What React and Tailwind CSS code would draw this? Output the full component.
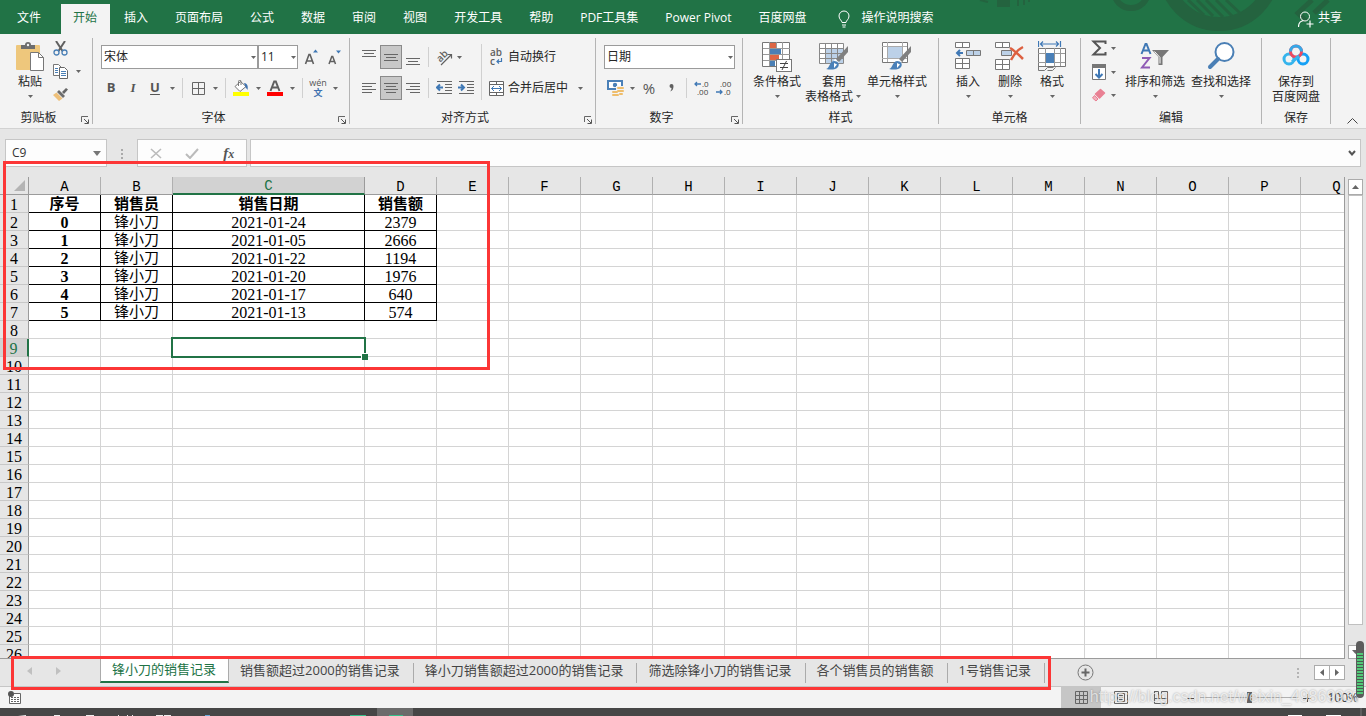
import React from "react";

const MENU = ["文件", "开始", "插入", "页面布局", "公式", "数据", "审阅", "视图", "开发工具", "帮助", "PDF工具集", "Power Pivot", "百度网盘"];

const COLUMNS = ["A", "B", "C", "D", "E", "F", "G", "H", "I", "J", "K", "L", "M", "N", "O", "P", "Q"];

const DATA = [
  ["序号", "销售员", "销售日期", "销售额"],
  ["0", "锋小刀", "2021-01-24", "2379"],
  ["1", "锋小刀", "2021-01-05", "2666"],
  ["2", "锋小刀", "2021-01-22", "1194"],
  ["3", "锋小刀", "2021-01-20", "1976"],
  ["4", "锋小刀", "2021-01-17", "640"],
  ["5", "锋小刀", "2021-01-13", "574"],
];

const ROW_COUNT = 26;

const SHEETS = [
  "锋小刀的销售记录",
  "销售额超过2000的销售记录",
  "锋小刀销售额超过2000的销售记录",
  "筛选除锋小刀的销售记录",
  "各个销售员的销售额",
  "1号销售记录",
];

/* ---------- small shared pieces ---------- */

function Svg({ w, h, children, className = "" }) {
  return (
    <svg width={w} height={h} viewBox={`0 0 ${w} ${h}`} fill="none" className={`shrink-0 ${className}`} aria-hidden="true">
      {children}
    </svg>
  );
}

function Caret({ className = "w-3" }) {
  return (
    <span className={`flex shrink-0 justify-center ${className}`}>
      <Svg w={5} h={3}>
        <path d="M0 0h5L2.500 3z" fill="#666" />
      </Svg>
    </span>
  );
}

function Divider({ className = "h-5" }) {
  return <span className={`mx-1 w-px shrink-0 bg-[#d0d0d0] ${className}`} />;
}

function Tool({ label, children, active = false }) {
  return (
    <button
      type="button"
      aria-label={label}
      className={`flex h-6 w-[22px] shrink-0 items-center justify-center ${active ? "border border-[#8a8a8a] bg-[#c8c8c8]" : ""}`}
    >
      {children}
    </button>
  );
}

function BigButton({ icon, lines, className = "", inlineCaret = false }) {
  return (
    <button type="button" className={`flex shrink-0 flex-col items-center whitespace-nowrap pt-[3px] leading-[15px] ${className}`}>
      <span className="flex h-[33px] items-start justify-center">{icon}</span>
      {lines.map((line, i) => (
        <span key={line} className="flex items-center">
          {line}
          {inlineCaret && i === lines.length - 1 && <Caret className="w-[10px]" />}
        </span>
      ))}
      {lines.length === 1 && (
        <span className="flex h-[15px] items-center">
          <Caret />
        </span>
      )}
    </button>
  );
}

function Group({ title, launcher = false, className = "", children }) {
  return (
    <section className={`flex h-[86px] shrink-0 flex-col border-r border-[#b4b4b4] ${className}`}>
      <div className="flex flex-1">{children}</div>
      <div className="flex h-[14px] items-start">
        <span className={`flex-1 text-center leading-4 ${launcher ? "pr-1" : ""}`}>{title}</span>
        {launcher && (
          <button type="button" aria-label={`${title}设置`} className="mr-[3px] flex self-end">
            <Svg w={8} h={8}>
              <path d="M.5 6V.5H7" stroke="#666" />
              <path d="M3 3l4 4M7.500 3.500v4h-4" stroke="#555" />
            </Svg>
          </button>
        )}
      </div>
    </section>
  );
}

function Lines({ rows, y = 1 }) {
  return (
    <Svg w={14} h={15}>
      {rows.map(([x, w], i) => (
        <rect key={i} x={x} y={y + i * 3} width={w} height="1" fill="#666" />
      ))}
    </Svg>
  );
}

/* ---------- ribbon icons ---------- */

const PasteIcon = () => (
  <Svg w={28} h={32}>
    <rect x="0" y="4" width="24" height="25" rx="1" fill="#eec77c" />
    <path d="M5 8V4h4a3 3 0 0 1 6 0h4v4z" fill="#6d6d6d" />
    <circle cx="12" cy="4" r="1.200" fill="#f3f3f3" />
    <path d="M14.500 11.500h8l5 5v13h-13z" fill="#fff" stroke="#777" />
    <path d="M22.500 11.500v5h5" stroke="#777" />
  </Svg>
);

const CutIcon = () => (
  <Svg w={15} h={15}>
    <path d="M3 0l6.500 10M12 0L5.500 10" stroke="#606060" strokeWidth="2" />
    <circle cx="3.500" cy="11.500" r="2.500" stroke="#4a7fb5" strokeWidth="1.300" />
    <circle cx="11.500" cy="11.500" r="2.500" stroke="#4a7fb5" strokeWidth="1.300" />
  </Svg>
);

const CopyIcon = () => (
  <Svg w={15} h={15}>
    <path d="M.5.5h5l3 3v8h-8z" fill="#fff" stroke="#777" />
    <path d="M2 4.500h3M2 6.500h3M2 8.500h3" stroke="#4a7fb5" />
    <path d="M6.500 3.500h5l3 3v8h-8z" fill="#fff" stroke="#666" />
    <path d="M8 7.500h5M8 9.500h5M8 11.500h5" stroke="#4a7fb5" />
  </Svg>
);

const BrushIcon = () => (
  <Svg w={15} h={15}>
    <path d="M9 5l4-4 2 1.500-4 4.500z" fill="#666" />
    <path d="M6 3l6 6-2 2-6-6z" fill="#6d6d6d" />
    <path d="M3.500 5.500l6 6L6 14 0 8z" fill="#eec07a" />
  </Svg>
);

const BordersIcon = () => (
  <Svg w={13} h={13}>
    <path d="M.5.5h12v12H.5zM6.500 0v13M0 6.500h13" stroke="#666" />
  </Svg>
);

const FillIcon = () => (
  <Svg w={16} h={16}>
    <path d="M7.500 1.500l5.500 5-6 5-5-5z" fill="#fff" stroke="#777" />
    <path d="M5.500 6V1.500a1 1 0 0 1 2.500 0V5" stroke="#777" />
    <path d="M11 3c3 0 4.500 3 3.500 7-1-2-2-2-2-3z" fill="#3f72af" />
    <rect y="12" width="16" height="4" fill="#ffff00" />
  </Svg>
);

const FontColorIcon = () => (
  <Svg w={16} h={16}>
    <path d="M3.500 11L7.200 1.500h1.600L12.500 11M5 7.500h6" stroke="#606060" strokeWidth="2" />
    <rect y="12" width="16" height="4" fill="#ff0000" />
  </Svg>
);

const PinyinIcon = () => (
  <span className="flex flex-col items-center text-[9px] leading-[10px] text-[#555]">
    <span>wén</span>
    <span className="font-bold text-[#3f72af]">文</span>
  </span>
);

const OrientIcon = () => (
  <Svg w={18} h={18}>
    <text x="2" y="11" fontSize="10" fontWeight="600" fill="#606060" transform="rotate(-45 8 9)">ab</text>
    <path d="M6 17l10-10M12.500 6.500H16.500V10.500" stroke="#606060" strokeWidth="1.200" />
  </Svg>
);

function IndentIcon({ out = false }) {
  return (
    <Svg w={16} h={14}>
      <path d="M1 .5h15M9 3.500h7M9 6.500h7M9 9.500h7M1 12.500h15" stroke="#666" />
      {out ? (
        <path d="M0 6.500h5M3 3.500l3 3-3 3" stroke="#3f78b5" strokeWidth="2" />
      ) : (
        <path d="M2 6.500h5M4 3.500l-3 3 3 3" stroke="#3f78b5" strokeWidth="2" />
      )}
    </Svg>
  );
}

const WrapIcon = () => (
  <Svg w={16} h={24}>
    <text x="1" y="11" fontSize="10" fontWeight="600" fill="#606060">ab</text>
    <text x="1" y="20" fontSize="10" fontWeight="600" fill="#606060">c</text>
    <path d="M12.500 13v3.500H8M10 14.500l-2 2 2 2" stroke="#3f78b5" strokeWidth="1.200" />
  </Svg>
);

const MergeIcon = () => (
  <Svg w={16} h={15}>
    <path d="M.5.5h14v14H.5zM.5 3.500h14M.5 11.500h14M7.500.5v3M7.500 11.500v3" fill="#fff" stroke="#666" />
    <path d="M2.500 7.500h10M5 5l-2.500 2.500L5 10M10 5l2.500 2.500L10 10" stroke="#3f78b5" />
  </Svg>
);

const MoneyIcon = () => (
  <Svg w={17} h={16}>
    <rect x="1" y="1" width="14" height="8" fill="#fff" stroke="#4a80b8" strokeWidth="2" />
    <circle cx="8" cy="5" r="2.200" fill="#4a80b8" />
    <path d="M9 6h8v10H9zM4 10h8v6H4z" fill="#f3f3f3" />
    <g fill="#eebd6c">
      <rect x="10" y="7" width="7" height="2" rx="1" />
      <rect x="10" y="10" width="7" height="2" rx="1" />
      <rect x="5" y="11" width="6" height="2" rx="1" />
      <rect x="5" y="14" width="7" height="2" rx="1" />
      <rect x="12" y="13" width="4" height="2" rx="1" />
    </g>
  </Svg>
);

function DecimalIcon({ less = false }) {
  return (
    <Svg w={18} h={20}>
      <g fontSize="8" fill="#444">
        {less ? (
          <>
            <text x="5" y="9">.00</text>
            <text x="9" y="17">.0</text>
            <path d="M1 14h6M5 12l2 2-2 2" stroke="#3f78b5" strokeWidth="1.300" fill="none" />
          </>
        ) : (
          <>
            <text x="9" y="9">.0</text>
            <text x="4" y="17">.00</text>
            <path d="M2 6h6M4 4L2 6l2 2" stroke="#3f78b5" strokeWidth="1.300" fill="none" />
          </>
        )}
      </g>
    </Svg>
  );
}

const ConditionalIcon = () => (
  <Svg w={30} h={31}>
    <path d="M.5 1.500h27v24H.5z" fill="#fff" stroke="#777" />
    <path d="M7.500 1v24M20.500 1v24M14.500 1v24M1 7.500h27M1 13.500h27M1 19.500h27" stroke="#999" />
    <rect x="8" y="2" width="6" height="5" fill="#dd6645" />
    <rect x="8" y="8" width="11" height="5" fill="#4a7fb5" />
    <rect x="8" y="14" width="9" height="5" fill="#dd6645" />
    <rect x="8" y="20" width="5" height="5" fill="#4a7fb5" />
    <rect x="14.500" y="18.500" width="15" height="12" fill="#fff" stroke="#777" />
    <path d="M18 22.500h8M18 26.500h8M24.500 20l-4.500 9" stroke="#444" />
  </Svg>
);

const StyleBrush = () => (
  <>
    <path d="M29 5v6l-9 10-3-3z" fill="#808080" />
    <path d="M15.500 18.500l3.500 3.500" stroke="#fff" strokeWidth="2" />
    <path d="M7 28c4-1 3-7 8-8 4 0 6 3 4 6-2 3-8 3-12 2z" fill="#4a80b8" />
    <path d="M15 22l3 1.500-3 3.500z" fill="#fff" />
  </>
);

const TableFormatIcon = () => (
  <Svg w={30} h={31}>
    <path d="M.5 2.500h24v20H.5z" fill="#fff" />
    <rect x="6" y="7" width="18" height="15" fill="#bcd1e8" />
    <path d="M.5 2.500h24v20H.5zM6.500 2v20M12.500 2v20M18.500 2v20M0 7.500h24M0 12.500h24M0 17.500h24" stroke="#888" />
    <StyleBrush />
  </Svg>
);

const CellStyleIcon = () => (
  <Svg w={30} h={31}>
    <path d="M.5 1.500h25v20H.5z" fill="#fff" stroke="#777" />
    <path d="M5.500 1v20M20.500 1v20M0 5.500h25M0 17.500h25" stroke="#aaa" />
    <rect x="6" y="6" width="14" height="11" fill="#bcd1e8" />
    <StyleBrush />
  </Svg>
);

const InsertIcon = () => (
  <Svg w={27} h={30}>
    <path d="M.5 1.500h14v5H.5zM7.500 1v5M.5 17.500h14v10H.5zM7.500 17v10M0 22.500h14" fill="#fff" stroke="#777" />
    <path d="M11.500 9.500h14v5h-14z" fill="#bcd1e8" stroke="#777" />
    <path d="M18.500 9v5" stroke="#777" />
    <path d="M2 12h6M5 9l-3 3 3 3" stroke="#3f78b5" strokeWidth="2" />
  </Svg>
);

const DeleteIcon = () => (
  <Svg w={30} h={30}>
    <path d="M.5 1.500h14v5H.5zM7.500 1v5M.5 18.500h14v10H.5zM7.500 18v10M0 23.500h14" fill="#fff" stroke="#777" />
    <path d="M6.500 9.500h10v5h-10z" fill="#bcd1e8" stroke="#777" />
    <path d="M15 7c4 2 9 7 13 11M28 6c-4 2-9 7-12 13" stroke="#dd6040" strokeWidth="2.500" />
  </Svg>
);

const FormatIcon = () => (
  <Svg w={28} h={31}>
    <path d="M.5 0v6M22.500 0v6M2 3h19M5 .5L2.500 3 5 5.500M18 .5L20.500 3 18 5.500" stroke="#3f78b5" strokeWidth="1.200" />
    <path d="M.5 7.500h27v18H.5z" fill="#fff" stroke="#777" />
    <path d="M7.500 7v18M16.500 7v18M22.500 7v18M0 12.500h27M0 21.500h27" stroke="#999" />
    <rect x="8" y="12" width="8" height="10" fill="#4a80b8" />
    <path d="M.5 25v4.500h6l3-3h6M9.500 29.500h5l3-3" stroke="#777" />
  </Svg>
);

const SigmaIcon = () => (
  <Svg w={16} h={16}>
    <path d="M14.500 4V1.500H2.500L9 8l-6.500 6.500h12V12" stroke="#555" strokeWidth="2" />
  </Svg>
);

const FillDownIcon = () => (
  <Svg w={16} h={16}>
    <path d="M1.500.5h13v15h-13z" fill="#fff" stroke="#777" />
    <rect x="1" y="0" width="14" height="4" fill="#777" />
    <path d="M8 5v8M4.500 10L8 13.500 11.500 10" stroke="#3f78b5" strokeWidth="2" />
  </Svg>
);

const EraserIcon = () => (
  <Svg w={16} h={14}>
    <path d="M9.500 1.500L13.500 5l-5 5-4-4z" fill="#e98093" stroke="#e98093" strokeWidth="1.500" strokeLinejoin="round" />
    <path d="M3.500 7.500L7 11l-2 2-3.500-3z" fill="#f3b0bb" stroke="#e98093" strokeLinejoin="round" />
  </Svg>
);

const SortFilterIcon = () => (
  <Svg w={30} h={30}>
    <path d="M1.500 13L5.500 3h1L10.500 13M3 9.500h6" stroke="#3f78b5" strokeWidth="2" />
    <path d="M2 17h7.500L2 26.500h8" stroke="#8f5bb5" strokeWidth="2" />
    <path d="M12 9h17l-6.500 7v8h-4v-8z" fill="#777" />
    <path d="M14.500 10.500l5.500 6v6" stroke="#fff" />
  </Svg>
);

const SearchIcon = () => (
  <Svg w={28} h={30}>
    <circle cx="17.500" cy="11" r="9" fill="#fff" stroke="#4a7fb5" strokeWidth="2" />
    <path d="M11 18L3 26" stroke="#4a7fb5" strokeWidth="4" strokeLinecap="round" />
  </Svg>
);

const NetdiskIcon = () => (
  <Svg w={28} h={30}>
    <circle cx="7" cy="18" r="5" stroke="#36b4ec" strokeWidth="3" />
    <circle cx="21" cy="18" r="5" stroke="#16a0f5" strokeWidth="3" />
    <circle cx="14" cy="10.500" r="5.500" stroke="#f0485e" strokeWidth="3" />
    <path d="M8.500 10.500a5.500 5.500 0 0 1 11 0" stroke="#36a8e8" strokeWidth="3" />
    <path d="M10 21l7-6" stroke="#36b4ec" strokeWidth="3" />
  </Svg>
);

/* ---------- page sections ---------- */

function MenuBar() {
  return (
    <header className="relative flex h-[34px] shrink-0 items-end overflow-hidden bg-[#217346] text-white">
      <svg width="440" height="34" viewBox="0 0 440 34" fill="none" stroke="#24633f" className="absolute right-0 top-0" aria-hidden="true">
        <circle cx="205" cy="-9" r="17" strokeWidth="6" />
        <circle cx="293" cy="-30" r="54" strokeWidth="14" />
        <path d="M262 0l16 15M271 0l16 16M280 0l17 17M290 0l16 16M300 0l15 14" strokeWidth="3" />
        <path d="M386 0l-14 13 8 8M402 0l-14 13" strokeWidth="5" />
        <path d="M71 0h13v7H71z" fill="#24633f" stroke="none" />
        <path d="M92 0v6M98 0v5M103 0v2M54 0l8 2" strokeWidth="2" />
      </svg>
      <nav className="relative flex gap-px pl-1">
        {MENU.map((item) => (
          <button
            key={item}
            type="button"
            className={`h-[30px] whitespace-nowrap pb-[2px] ${item === "文件" ? "mr-[6px]" : ""} ${
              item === "开始" ? "bg-[#f3f3f3] px-[12px] pr-[13px] text-[#217346]" : "px-[13px]"
            }`}
          >
            {item}
          </button>
        ))}
      </nav>
      <button type="button" className="relative flex h-[30px] items-center gap-3 whitespace-nowrap pb-[2px] pl-[18px]">
        <Svg w={12} h={18} className="mt-[2px]">
          <path d="M4 12.500c0-2-3-3-3-6.500a5 5 0 0 1 10 0c0 3.500-3 4.500-3 6.500zM4 15h4M4.500 17h3" stroke="#fff" />
        </Svg>
        操作说明搜索
      </button>
      <button type="button" className="relative ml-auto mr-6 flex h-[30px] items-center gap-1 pb-[2px]">
        <Svg w={16} h={17} className="mt-[2px]">
          <circle cx="7" cy="5.500" r="4.500" stroke="#fff" />
          <path d="M.5 16c0-4 2-6 5-6.500M12 9.500v7M8.500 13h7" stroke="#fff" strokeWidth="1.200" />
        </Svg>
        共享
      </button>
    </header>
  );
}

function Ribbon() {
  return (
    <div className="flex h-[95px] shrink-0 border-b border-[#d2d2d2] bg-[#f3f3f3] pt-1">
      <Group title="剪贴板" launcher className="w-[93px]">
        <BigButton icon={<PasteIcon />} lines={["粘贴"]} className="ml-[14px] w-[32px]" />
        <div className="ml-[7px] flex flex-col gap-2 pt-[3px]">
          <button type="button" aria-label="剪切"><CutIcon /></button>
          <button type="button" aria-label="复制" className="flex items-center gap-1">
            <CopyIcon />
            <Caret />
          </button>
          <button type="button" aria-label="格式刷"><BrushIcon /></button>
        </div>
      </Group>

      <Group title="字体" launcher className="w-[257px]">
        <div className="flex flex-col gap-[7px] pl-[7px] pt-[7px]">
          <div className="ml-px flex items-center">
            <label className="relative flex items-center">
              <select aria-label="字体" className="h-6 w-[157px] appearance-none border border-[#9b9b9b] bg-white pl-[2px]">
                <option>宋体</option>
              </select>
              <Caret className="pointer-events-none absolute right-[2px]" />
            </label>
            <label className="relative flex items-center">
              <select aria-label="字号" className="h-6 w-[40px] appearance-none border border-[#9b9b9b] bg-white pl-[2px]">
                <option>11</option>
              </select>
              <Caret className="pointer-events-none absolute right-[2px]" />
            </label>
            <button type="button" aria-label="增大字号" className="ml-[6px] flex w-6 items-center">
              <Svg w={14} h={16}>
                <path d="M1.500 15L5 5.500h1L9.500 15M2.500 12h6" stroke="#606060" strokeWidth="1.600" />
                <path d="M9 3.500h5L11.500.5z" fill="#3f78b5" />
              </Svg>
            </button>
            <button type="button" aria-label="减小字号" className="flex items-center">
              <Svg w={13} h={16}>
                <path d="M1 15l2.800-7.500h.9L7.500 15M2 12.500h4.500" stroke="#606060" strokeWidth="1.500" />
                <path d="M8 1.500h5l-2.500 3z" fill="#3f78b5" />
              </Svg>
            </button>
          </div>
          <div className="flex items-center text-[13px] text-[#555]">
            <Tool label="加粗"><b>B</b></Tool>
            <Tool label="倾斜"><i className="font-['Liberation_Serif',serif] font-bold">I</i></Tool>
            <Tool label="下划线"><span className="font-bold underline underline-offset-2">U</span></Tool>
            <Caret />
            <Divider />
            <Tool label="边框"><BordersIcon /></Tool>
            <Caret />
            <Divider />
            <Tool label="填充颜色"><FillIcon /></Tool>
            <Caret />
            <Tool label="字体颜色"><FontColorIcon /></Tool>
            <Caret />
            <Divider />
            <Tool label="拼音"><PinyinIcon /></Tool>
            <Caret />
          </div>
        </div>
      </Group>

      <Group title="对齐方式" launcher className="w-[246px]">
        <div className="flex flex-col gap-[7px] pl-2 pt-[7px]">
          <div className="flex items-center">
            <Tool label="顶端对齐"><Lines rows={[[0, 14], [2, 10], [0, 14]]} y={0} /></Tool>
            <Tool label="垂直居中" active><Lines rows={[[0, 14], [2, 10], [0, 14]]} y={4} /></Tool>
            <Tool label="底端对齐"><Lines rows={[[0, 14], [2, 10], [0, 14]]} y={8} /></Tool>
            <Divider />
            <Tool label="方向"><OrientIcon /></Tool>
            <Caret className="w-2" />
          </div>
          <div className="flex items-center">
            <Tool label="左对齐"><Lines rows={[[0, 14], [0, 10], [0, 14], [0, 10]]} y={2} /></Tool>
            <Tool label="居中" active><Lines rows={[[0, 14], [2, 10], [0, 14], [2, 10]]} y={2} /></Tool>
            <Tool label="右对齐"><Lines rows={[[0, 14], [4, 10], [0, 14], [4, 10]]} y={2} /></Tool>
            <Divider />
            <Tool label="减少缩进量"><IndentIcon /></Tool>
            <Tool label="增加缩进量"><IndentIcon out /></Tool>
          </div>
        </div>
        <Divider className="mt-[6px] h-[56px]" />
        <div className="flex flex-col items-start gap-[7px] pt-[7px]">
          <button type="button" className="flex h-6 items-center gap-[3px] pl-[3px]">
            <WrapIcon />
            自动换行
          </button>
          <button type="button" className="flex h-6 items-center gap-[3px] pl-[3px]">
            <MergeIcon />
            合并后居中
            <Caret className="ml-[3px] w-3" />
          </button>
        </div>
      </Group>

      <Group title="数字" launcher className="w-[147px]">
        <div className="flex flex-col gap-[7px] pl-2 pt-[7px]">
          <label className="relative flex items-center">
            <select aria-label="数字格式" className="h-6 w-[131px] appearance-none border border-[#9b9b9b] bg-white pl-[2px]">
              <option>日期</option>
            </select>
            <Caret className="pointer-events-none absolute right-[2px]" />
          </label>
          <div className="flex items-center text-[15px] text-[#555]">
            <Tool label="会计数字格式"><MoneyIcon /></Tool>
            <Caret />
            <Tool label="百分比样式">%</Tool>
            <Tool label="千位分隔样式">
              <Svg w={5} h={8}>
                <path d="M4.500 2c0 3-1 5-3.500 5.500 1-1 1.500-2 1.500-3.500A2 2 0 1 1 4.500 2z" fill="#606060" />
              </Svg>
            </Tool>
            <Divider />
            <Tool label="增加小数位数"><DecimalIcon /></Tool>
            <Tool label="减少小数位数"><DecimalIcon less /></Tool>
          </div>
        </div>
      </Group>

      <Group title="样式" className="w-[196px]">
        <div className="flex gap-1 pl-[10px]">
          <BigButton icon={<ConditionalIcon />} lines={["条件格式"]} />
          <BigButton icon={<TableFormatIcon />} lines={["套用", "表格格式"]} inlineCaret />
          <BigButton icon={<CellStyleIcon />} lines={["单元格样式"]} />
        </div>
      </Group>

      <Group title="单元格" className="w-[142px]">
        <div className="flex pl-2">
          <BigButton icon={<InsertIcon />} lines={["插入"]} className="w-[42px]" />
          <BigButton icon={<DeleteIcon />} lines={["删除"]} className="w-[42px]" />
          <BigButton icon={<FormatIcon />} lines={["格式"]} className="w-[42px]" />
        </div>
      </Group>

      <Group title="编辑" className="w-[181px]">
        <div className="flex gap-[6px] pl-[10px]">
          <div className="flex flex-col gap-2 pt-[2px]">
            <button type="button" aria-label="自动求和" className="flex items-center"><SigmaIcon /><Caret /></button>
            <button type="button" aria-label="填充" className="flex items-center"><FillDownIcon /><Caret /></button>
            <button type="button" aria-label="清除" className="flex items-center"><EraserIcon /><Caret /></button>
          </div>
          <BigButton icon={<SortFilterIcon />} lines={["排序和筛选"]} />
          <BigButton icon={<SearchIcon />} lines={["查找和选择"]} />
        </div>
      </Group>

      <Group title="保存" className="w-[69px]">
        <BigButton icon={<NetdiskIcon />} lines={["保存到", "百度网盘"]} className="w-full" />
      </Group>

      <button type="button" aria-label="折叠功能区" className="mb-1 ml-auto mr-2 self-end">
        <Svg w={11} h={6}>
          <path d="M.5 5.500l5-5 5 5" stroke="#444" />
        </Svg>
      </button>
    </div>
  );
}

function FormulaBar() {
  return (
    <div className="flex h-12 shrink-0 items-start bg-[#e6e6e6] pl-[5px] pr-[5px] pt-[10px]">
      <div className="flex h-7 w-[102px] items-center border border-[#c6c6c6] bg-[#fdfdfd]">
        <input aria-label="名称框" defaultValue="C9" className="w-full min-w-0 bg-transparent pl-[6px] text-[#333] outline-none" />
        <button type="button" aria-label="名称列表" className="mr-[5px]">
          <Svg w={8} h={5}>
            <path d="M0 0h8L4 5z" fill="#777" />
          </Svg>
        </button>
      </div>
      <Svg w={30} h={28}>
        <path d="M14 10h2v2h-2zM14 14h2v2h-2zM14 18h2v2h-2z" fill="#aaa" />
      </Svg>
      <div className="mr-[3px] flex h-7 w-[110px] items-center justify-around border border-[#c6c6c6] bg-[#fdfdfd]">
        <button type="button" aria-label="取消">
          <Svg w={12} h={11}>
            <path d="M1 1l10 9M11 1L1 10" stroke="#bbb" strokeWidth="1.600" />
          </Svg>
        </button>
        <button type="button" aria-label="输入">
          <Svg w={14} h={11}>
            <path d="M1 6l4 4 8-9" stroke="#bbb" strokeWidth="2" />
          </Svg>
        </button>
        <button type="button" aria-label="插入函数" className="font-['Liberation_Serif',serif] text-[15px] font-bold italic leading-4 text-[#555]">
          f<span className="text-[12px]">x</span>
        </button>
      </div>
      <div className="flex h-7 flex-1 items-center border border-[#c6c6c6] bg-[#fdfdfd]">
        <input aria-label="编辑栏" className="min-w-0 flex-1 bg-transparent px-2 outline-none" />
        <button type="button" aria-label="展开编辑栏" className="mr-1">
          <Svg w={8} h={6}>
            <path d="M1 1l3 3.500L7 1" stroke="#555" strokeWidth="2" />
          </Svg>
        </button>
      </div>
    </div>
  );
}

function Cell({ row, col }) {
  const value = DATA[row] ? DATA[row][col] : undefined;
  const selected = row === 8 && col === 2;
  const isText = row === 0 || col === 1;

  if (value !== undefined) {
    return (
      <td
        className={`h-[18px] border-b border-r border-black p-0 pt-[2px] text-center leading-[15px] text-black
          ${isText ? "text-[15px]" : "text-[16px]"}
          ${row === 0 || col === 0 ? "font-bold" : ""}
        `}
      >
        {value}
      </td>
    );
  }

  return (
    <td className={`h-[18px] border-b border-r border-[#d4d4d4] p-0 ${selected ? "relative" : ""}`}>
      {selected && (
        <>
          <span className="absolute -inset-[2px] border-2 border-[#217346]" />
          <span className="absolute -bottom-1 -right-1 size-[7px] border-l border-t border-white bg-[#217346]" />
        </>
      )}
    </td>
  );
}

function Sheet() {
  const rows = Array.from({ length: ROW_COUNT }, (_, i) => i);

  return (
    <main className="flex min-h-0 flex-1 bg-[#e6e6e6]">
      <div className="min-w-0 flex-1 overflow-hidden border-b border-r border-[#9b9b9b]">
        <table className="w-px table-fixed border-separate border-spacing-0 bg-white font-['Liberation_Serif','Noto_Sans_CJK_SC',serif]">
          <thead>
            <tr>
              <th className="h-[18px] w-[29px] border-b border-r border-[#9b9b9b] bg-[#e6e6e6] p-0">
                <Svg w={11} h={11} className="ml-auto mr-[3px]">
                  <path d="M11 0v11H0z" fill="#b4b4b4" />
                </Svg>
              </th>
              {COLUMNS.map((c) => (
                <th
                  key={c}
                  scope="col"
                  className={`h-[18px] border-r p-0 pt-[2px] text-center font-['Liberation_Mono',monospace] text-[14px] font-normal leading-[14px]
                    ${c === "C"
                      ? "w-[192px] border-b-2 border-r-[#9b9b9b] border-b-[#217346] bg-[#d2d2d2] text-[#217346]"
                      : "w-[72px] border-b border-r-[#b0b0b0] border-b-[#9b9b9b] bg-[#e6e6e6] text-black"}
                  `}
                >
                  {c}
                </th>
              ))}
            </tr>
          </thead>
          <tbody>
            {rows.map((r) => (
              <tr key={r}>
                <th
                  scope="row"
                  className={`h-[18px] border-b border-r border-b-[#c8c8c8] p-0 pt-[2px] text-center text-[16px] font-normal leading-[15px]
                    ${r === 8 ? "border-r-2 border-r-[#217346] bg-[#d2d2d2] text-[#217346]" : "border-r-[#9b9b9b] bg-[#e6e6e6] text-black"}
                  `}
                >
                  {r + 1}
                </th>
                {COLUMNS.map((c, i) => (
                  <Cell key={c} row={r} col={i} />
                ))}
              </tr>
            ))}
          </tbody>
        </table>
      </div>

      {/* Vertical scrollbar */}
      <div className="ml-[3px] mr-[3px] flex w-[15px] shrink-0 flex-col pt-[2px]">
        <button type="button" aria-label="向上滚动" className="flex h-4 items-center justify-center border border-[#ababab] bg-white">
          <Svg w={7} h={4}><path d="M0 4h7L3.500 0z" fill="#666" /></Svg>
        </button>
        <div className="mb-5 flex-1 border border-[#c0c0c0] bg-white" />
        <button type="button" aria-label="向下滚动" className="flex h-[14px] items-center justify-center border border-[#ababab] bg-white">
          <Svg w={7} h={4}><path d="M0 0h7L3.500 4z" fill="#666" /></Svg>
        </button>
      </div>
    </main>
  );
}

function SheetTabs() {
  return (
    <div className="flex h-7 shrink-0 items-start border-b border-[#c6c6c6] bg-[#e6e6e6]">
      <div className="flex h-6 w-[100px] items-center gap-6 pl-[27px]">
        <button type="button" aria-label="上一个工作表"><Svg w={5} h={8}><path d="M5 0v8L0 4z" fill="#c0c0c0" /></Svg></button>
        <button type="button" aria-label="下一个工作表"><Svg w={5} h={8}><path d="M0 0v8l5-4z" fill="#c0c0c0" /></Svg></button>
      </div>
      {SHEETS.map((name, i) =>
        i === 0 ? (
          <button key={name} type="button" className="h-6 whitespace-nowrap border-b-2 border-l border-r border-b-[#217346] border-l-[#ababab] border-r-[#ababab] bg-white pl-[11px] pr-3 text-[13px] text-[#217346]">
            {name}
          </button>
        ) : (
          <button key={name} type="button" className="flex h-6 items-center whitespace-nowrap pl-[11px] text-[13px] text-[#444]">
            {name}
            <span className="ml-[13px] mt-1 h-5 w-px bg-[#ababab]" />
          </button>
        )
      )}
      <button type="button" aria-label="新工作表" className="ml-8 mt-[5px]">
        <Svg w={17} h={17}>
          <circle cx="8.500" cy="8.500" r="7.500" stroke="#777" />
          <path d="M8.500 4.500v8M4.500 8.500h8" stroke="#666" strokeWidth="2" />
        </Svg>
      </button>
      <div className="ml-auto mr-[21px] flex h-[27px] items-center">
        <Svg w={2} h={10} className="mr-[15px]">
          <path d="M0 0h2v2H0zM0 4h2v2H0zM0 8h2v2H0z" fill="#b4b4b4" />
        </Svg>
        <button type="button" aria-label="向左滚动" className="flex h-[15px] w-4 items-center justify-center border border-[#ababab] bg-white">
          <Svg w={4} h={7}><path d="M4 0v7L0 3.500z" fill="#666" /></Svg>
        </button>
        <button type="button" aria-label="向右滚动" className="-ml-px flex h-[15px] w-4 items-center justify-center border border-[#ababab] bg-white">
          <Svg w={4} h={7}><path d="M0 0v7l4-3.500z" fill="#666" /></Svg>
        </button>
      </div>
    </div>
  );
}

function StatusBar() {
  return (
    <footer className="relative flex h-[21px] shrink-0 items-center bg-[#f3f3f3]">
      <button type="button" aria-label="录制宏" className="ml-2">
        <Svg w={14} h={14}>
          <path d="M1.500 5v7.500h11v-10H6" fill="#fff" stroke="#666" />
          <path d="M3 6.500h2M6 6.500h2M9 6.500h2M3 8.500h2M6 8.500h2M9 8.500h2M3 10.500h2M6 10.500h2M9 10.500h2" stroke="#666" />
          <circle cx="3" cy="3" r="3" fill="#555" />
        </Svg>
      </button>
      <div className="ml-auto flex items-center">
        <button type="button" aria-label="普通" className="flex h-[21px] w-10 items-center justify-center bg-[#c6c6c6]">
          <Svg w={13} h={13}><path d="M.5.5h12v12H.5zM4.500 0v13M8.500 0v13M0 4.500h13M0 8.500h13" stroke="#666" /></Svg>
        </button>
        <button type="button" aria-label="页面布局视图" className="flex h-[21px] w-10 items-center justify-center">
          <Svg w={14} h={13}><path d="M.5.5h13v12H.5zM3.500 2.500h7v8h-7zM5 4.500h4M5 6.500h4M5 8.500h4" stroke="#666" /></Svg>
        </button>
        <button type="button" aria-label="分页预览" className="flex h-[21px] w-10 items-center justify-center">
          <Svg w={14} h={13}><path d="M.5 0v12.500h13V.5h-6v7h-7M.5.5h4v7M13.500 7.500h-6" stroke="#666" /></Svg>
        </button>
        <button type="button" aria-label="缩小" className="ml-[6px]"><Svg w={8} h={8}><path d="M0 4.500h7" stroke="#555" /></Svg></button>
        <input
          type="range"
          aria-label="缩放"
          defaultValue="50"
          className="mx-[5px] h-3 w-[98px] appearance-none bg-transparent [&::-webkit-slider-runnable-track]:h-px [&::-webkit-slider-runnable-track]:bg-[#b0b0b0] [&::-webkit-slider-thumb]:-mt-[5px] [&::-webkit-slider-thumb]:h-[11px] [&::-webkit-slider-thumb]:w-[5px] [&::-webkit-slider-thumb]:appearance-none [&::-webkit-slider-thumb]:bg-[#666]"
        />
        <button type="button" aria-label="放大"><Svg w={8} h={8}><path d="M0 4.500h8M4.500 0v8" stroke="#555" /></Svg></button>
        <span className="ml-4 mr-2 text-[#444]">100%</span>
      </div>
      <span className="pointer-events-none absolute right-1 top-0 font-['Liberation_Sans',sans-serif] text-[16px] leading-5 text-white/70 [text-shadow:0_0_2px_rgba(0,0,0,0.35)]">
        https://blog.csdn.net/weixin_49869937
      </span>
    </footer>
  );
}

function Taskbar() {
  return (
    <div className="flex h-2 shrink-0 bg-[#464646]">
      <Svg w={420} h={8}>
        <rect x="377" width="36" height="8" fill="#6b6b6b" />
        <path d="M18 8l8-1v1zM54 7h6v1h-6zM86 7h8v1h-8zM118 7h1v1h-1zM127 7h1v1h-1zM132 7h1v1h-1zM156 7h7v1h-7zM164 7h7v1h-7z" fill="#eee" />
        <path d="M205 7h5v1h-5z" fill="#6aa8d8" />
        <path d="M350 7h16v1h-16zM389 7h14v1h-14z" fill="#35c08a" />
      </Svg>
      <Svg w={150} h={8} className="ml-auto">
        <path d="M72 7h14v1H72zM110 7h15v1h-15z" fill="#fff" />
        <path d="M145 0v8" stroke="#777" />
      </Svg>
    </div>
  );
}

export default function App() {
  return (
    <div className="relative flex h-screen flex-col overflow-hidden bg-[#e6e6e6] font-['Open_Sans','Noto_Sans_CJK_SC',sans-serif] text-[12px] text-[#262626]">
      <MenuBar />
      <Ribbon />
      <FormulaBar />
      <Sheet />
      <SheetTabs />
      <StatusBar />
      <Taskbar />

      {/* Red annotation frames */}
      <div className="pointer-events-none absolute left-[3px] top-[161px] h-[209px] w-[487px] border-3 border-[#fc3636]" />
      <div className="pointer-events-none absolute bottom-[26px] left-[11px] h-[34px] w-[1040px] border-3 border-[#fc3636]" />

      {/* Floating volume level */}
      <div className="pointer-events-none absolute bottom-[18px] right-[2px] flex h-[57px] w-2 flex-col rounded-full bg-[#5c5c5c] px-px pb-1 pt-3">
        <div className="flex-1 bg-[repeating-linear-gradient(to_bottom,#52c878_0px,#52c878_2px,#4a5a50_2px,#4a5a50_3px)]" />
      </div>
    </div>
  );
}
